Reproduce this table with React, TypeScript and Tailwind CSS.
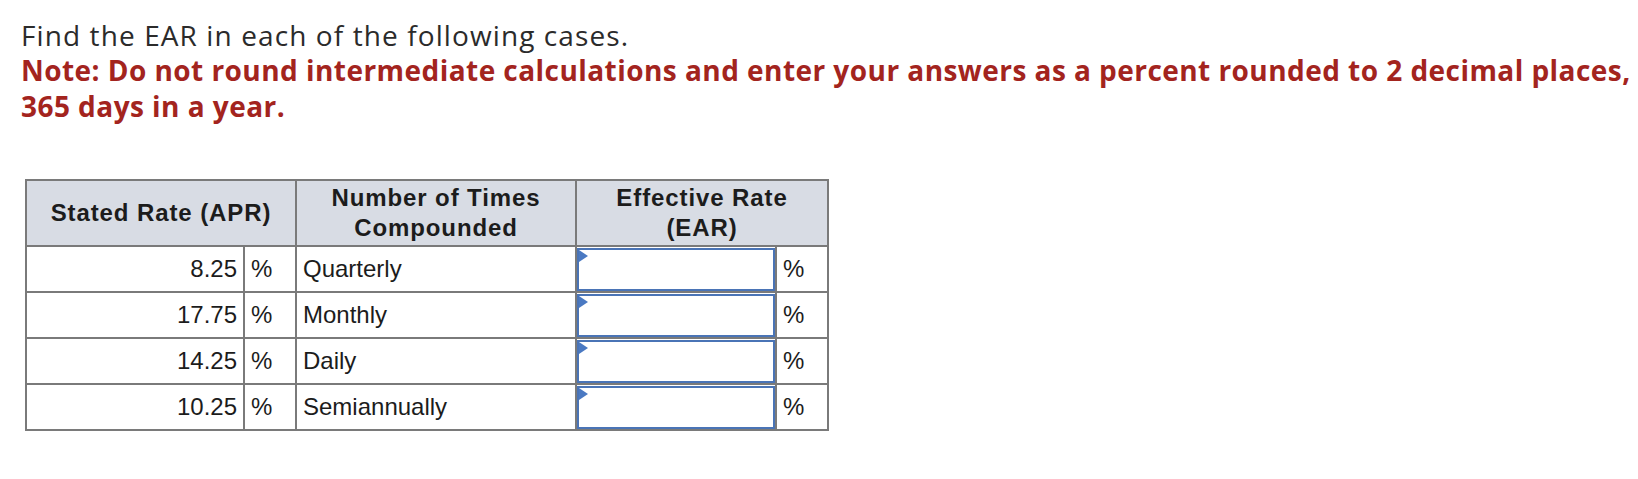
import React from "react";

type Row = { apr: string; period: string };

const rows: Row[] = [
  { apr: "8.25", period: "Quarterly" },
  { apr: "17.75", period: "Monthly" },
  { apr: "14.25", period: "Daily" },
  { apr: "10.25", period: "Semiannually" },
];

function AnswerBox() {
  return (
    <div className="relative h-[43px] w-full border-2 border-[#4a74b6] bg-white">
      {/* little marker in the corner of each answer field */}
      <span className="absolute left-0 top-0 h-0 w-0 border-y-[6px] border-l-[9px] border-y-transparent border-l-[#4a79c2]" />
    </div>
  );
}

export default function App() {
  return (
    <div className="min-h-screen bg-white pl-[21px] pt-[16px]">
      <div className="font-['Open_Sans',sans-serif] text-[28px]">
        <p className="pt-[3px] leading-[33px] tracking-[1.1px] text-[#2b2b2b]">
          Find the EAR in each of the following cases.
        </p>
        <p className="font-bold leading-[36px] tracking-[0.45px] text-[#a3241e]">
          Note: Do not round intermediate calculations and enter your answers as a percent rounded to 2 decimal places,
          <br />
          365 days in a year.
        </p>
      </div>

      <table className="ml-[4px] mt-[55px] table-fixed border-collapse font-['Liberation_Sans',Arial,sans-serif] text-[24px] text-[#1c1c1c]">
        <colgroup>
          <col className="w-[218px]" />
          <col className="w-[52px]" />
          <col className="w-[280px]" />
          <col className="w-[200px]" />
          <col className="w-[52px]" />
        </colgroup>
        <thead>
          <tr className="h-[66px] bg-[#d8dce4]">
            <th colSpan={2} className="border-2 border-[#7a7a7a] text-center font-bold leading-[30px] tracking-[0.9px]">
              Stated Rate (APR)
            </th>
            <th className="border-2 border-[#7a7a7a] text-center font-bold leading-[30px] tracking-[0.9px]">
              Number of Times
              <br />
              Compounded
            </th>
            <th colSpan={2} className="border-2 border-[#7a7a7a] text-center font-bold leading-[30px] tracking-[0.9px]">
              Effective Rate
              <br />
              (EAR)
            </th>
          </tr>
        </thead>
        <tbody>
          {rows.map((row) => (
            <tr key={row.period} className="h-[46px]">
              <td className="border-2 border-[#7a7a7a] px-[6px] text-right">{row.apr}</td>
              <td className="border-2 border-[#7a7a7a] px-[6px]">%</td>
              <td className="border-2 border-[#7a7a7a] px-[6px]">{row.period}</td>
              <td className="border-2 border-[#7a7a7a] p-0 pt-px">
                <AnswerBox />
              </td>
              <td className="border-2 border-[#7a7a7a] px-[6px]">%</td>
            </tr>
          ))}
        </tbody>
      </table>
    </div>
  );
}
